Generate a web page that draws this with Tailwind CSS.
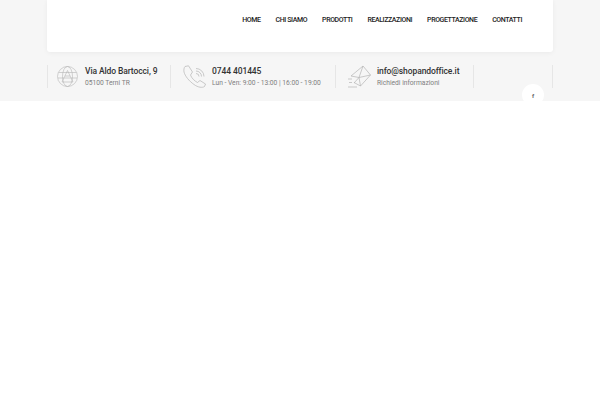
<!DOCTYPE html>
<html lang="it">
<head>
    <meta charset="UTF-8">
    <meta name="viewport" content="width=device-width, initial-scale=1.0">
    <title>Shop and Office</title>
    <script src="https://cdn.jsdelivr.net/npm/@tailwindcss/browser@4"></script>
</head>
<body class="bg-white font-['Roboto',sans-serif] h-[400px] overflow-hidden">

    <div class="bg-[#f6f6f6] h-[101px]">
        <div class="w-[506px] ml-[47px]">
            <!-- menu -->
            <nav class="bg-white h-[52px] rounded-b-[3px] shadow-[0_1px_5px_rgba(0,0,0,0.05)] flex justify-end items-start pr-[31px] pt-[16px] gap-[15px] text-[#222] text-[7px] tracking-[-0.4px] leading-[9px] font-medium">
                <a href="#">HOME</a>
                <a href="#">CHI SIAMO</a>
                <a href="#">PRODOTTI</a>
                <a href="#">REALIZZAZIONI</a>
                <a href="#">PROGETTAZIONE</a>
                <a href="#">CONTATTI</a>
            </nav>

            <!-- contatti -->
            <div class="relative flex mt-[13px] h-[23px] border-r border-[#e6e6e6]">
                <div class="w-[123px] border-l border-[#e6e6e6] flex items-center pl-[9px] gap-[7px]">
                    <svg class="w-[21px] h-[21px] shrink-0" viewBox="0 0 21 21" fill="none" stroke="#b5b5b5" stroke-width="0.6">
                        <circle cx="10.5" cy="10.5" r="10"/>
                        <ellipse cx="10.5" cy="10.5" rx="5" ry="10"/>
                        <path d="M1.5 6.500h18M1 12h19"/>
                        <path d="M10.500 4.500L5 16h11z"/>
                        <path d="M8 10h5"/>
                    </svg>
                    <div>
                        <p class="text-[8.5px] leading-[11px] font-medium text-[#333] tracking-[-0.1px]">Via Aldo Bartocci, 9</p>
                        <p class="text-[6.7px] leading-[9px] mt-[2px] text-[#808080]">05100 Terni TR</p>
                    </div>
                </div>
                <div class="w-[165px] border-l border-[#e6e6e6] flex items-center pl-[12px] gap-[6px]">
                    <svg class="w-[23px] h-[23px] shrink-0" viewBox="0 0 23 23" fill="none" stroke="#b5b5b5" stroke-width="0.7">
                        <path d="M2 1.500L5.500 .8 9.500 7 7.500 10C8.500 13 11.500 16 14.500 17.500L17 15.500 22.500 19 21.500 21.500C19.500 23 15 22.500 11 19.500 6 16 2 11 1 7 .7 5 1 2.500 2 1.500z"/>
                        <path d="M13 8.500a3 3 0 0 1 3 3M13 6a5.500 5.500 0 0 1 5.500 5.500M13 3.500a8 8 0 0 1 8 8"/>
                    </svg>
                    <div>
                        <p class="text-[8.5px] leading-[11px] font-medium text-[#333] tracking-[-0.1px]">0744 401445</p>
                        <p class="text-[6.7px] leading-[9px] mt-[2px] text-[#808080] whitespace-nowrap">Lun - Ven: 9:00 - 13:00 | 16:00 - 19:00</p>
                    </div>
                </div>
                <div class="w-[139px] border-x border-[#e6e6e6] flex items-center pl-[12px] gap-[6px]">
                    <svg class="w-[23px] h-[23px] shrink-0" viewBox="0 0 23 23" fill="none" stroke="#b5b5b5" stroke-width="0.7">
                        <path d="M3 11L15 1l7.500 9-10 11-6.500-3.500"/>
                        <path d="M3 11L11 12.500 22.500 10M15 1L11 12.500 12.500 21M11 12.500L6 18"/>
                        <path d="M0 14h4M1 17.500h3M0 22h9"/>
                    </svg>
                    <div>
                        <p class="text-[8.5px] leading-[11px] font-medium text-[#333] tracking-[-0.1px]">info@shopandoffice.it</p>
                        <p class="text-[6.7px] leading-[9px] mt-[2px] text-[#808080]">Richiedi informazioni</p>
                    </div>
                </div>
                <a href="#" class="absolute left-[475px] top-[19px] w-[22px] h-[22px] rounded-full bg-white flex items-center justify-center text-[6px] font-bold text-[#666]">f</a>
            </div>
        </div>
    </div>

</body>
</html>
